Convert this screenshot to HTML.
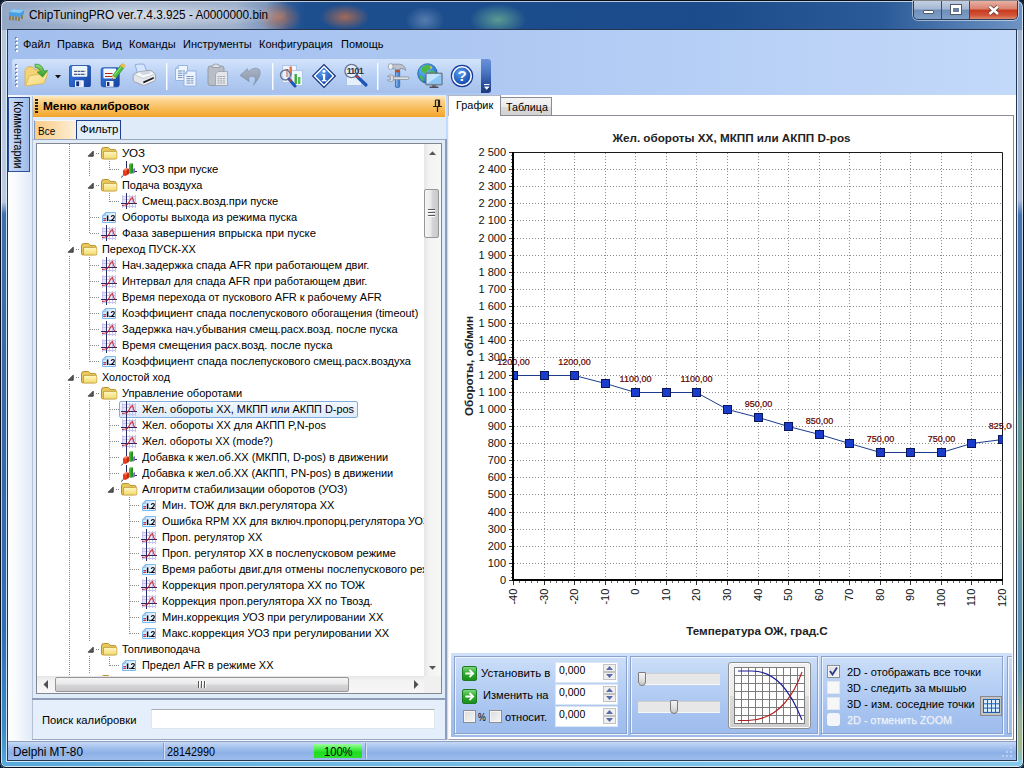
<!DOCTYPE html><html><head><meta charset="utf-8"><style>
*{box-sizing:border-box;margin:0;padding:0}
html,body{width:1024px;height:768px;overflow:hidden;background:#0b1a33;font-family:"Liberation Sans",sans-serif;font-size:11px;color:#000}
.abs{position:absolute}
#win{position:absolute;left:0;top:0;width:1024px;height:768px;border-radius:7px 7px 6px 6px;overflow:hidden;
 background:linear-gradient(90deg,#93a7c6 0,#a3b4ce 120px,#a0b1cc 235px,#7f98be 266px,#2f5c9a 288px,#1d4e8e 305px,#1b4b8a 700px,#2a5a97 880px,#6f94c4 1023px);}
#winborder{position:absolute;left:0;top:0;width:1024px;height:768px;border-radius:7px 7px 6px 6px;border:1px solid #0a0f1a;box-shadow:inset 0 0 0 1px rgba(255,255,255,.7)}
#client{position:absolute;left:8px;top:30px;width:1008px;height:730px;background:#bfdbff;overflow:hidden}
#clientborder{position:absolute;left:7px;top:29px;width:1010px;height:732px;border:1px solid #26364f}
.t{position:absolute;white-space:nowrap;line-height:1}
</style></head><body><div id="win">
<div class="abs" style="left:256px;top:2px;width:46px;height:28px;background:radial-gradient(ellipse at 50% 55%,rgba(205,115,70,.7),rgba(205,115,70,0) 70%)"></div>
<div class="abs" style="left:320px;top:4px;width:50px;height:26px;background:radial-gradient(ellipse at 50% 50%,rgba(205,115,70,.75),rgba(205,115,70,0) 70%)"></div>
<div class="abs" style="left:405px;top:6px;width:40px;height:24px;background:radial-gradient(ellipse at 50% 60%,rgba(140,170,210,.5),rgba(140,170,210,0) 70%)"></div>
<div class="abs" style="left:470px;top:4px;width:56px;height:26px;background:radial-gradient(ellipse at 50% 60%,rgba(110,180,150,.75),rgba(110,180,150,0) 72%)"></div>
<div class="abs" style="left:0;top:30px;width:8px;height:738px;background:linear-gradient(180deg,#b4c5dc 0,#bccbe0 165px,#b8c8de 172px,#3f6fae 184px,#3568aa 400px,#2f6fb3 600px,#3f8cc8 700px,#58a8da 738px)"></div>
<div class="abs" style="left:1016px;top:30px;width:8px;height:738px;background:linear-gradient(180deg,#a2b7d4 0,#a9bdd8 170px,#4575b3 185px,#3f74b4 340px,#5f9499 380px,#73a38d 470px,#5a92ad 540px,#5f97b4 640px,#9db596 690px,#a3b98f 715px,#7cc2e2 738px)"></div>
<div class="abs" style="left:0;top:760px;width:1024px;height:8px;background:linear-gradient(90deg,#58a8da 0,#6fb8e2 300px,#7cc2e8 700px,#86c8ea 1024px)"></div>
<div class="abs" style="left:6px;top:30px;width:1px;height:731px;background:rgba(225,240,255,.85)"></div>
<div class="abs" style="left:1017px;top:30px;width:1px;height:731px;background:rgba(225,240,255,.85)"></div>
<div class="abs" style="left:6px;top:761px;width:1012px;height:1px;background:rgba(225,245,255,.85)"></div>
</div>
<div id="winborder"></div>
<div class="abs" style="left:6px;top:3px;width:280px;height:24px;border-radius:12px;background:radial-gradient(ellipse at 50% 50%,rgba(255,255,255,.55),rgba(255,255,255,0) 75%)"></div>
<div class="t" style="left:29px;top:9px;font-size:12px;color:#000;transform-origin:0 0;transform:scaleX(.981)">ChipTuningPRO ver.7.4.3.925 - A0000000.bin</div>
<svg class="abs" style="left:8px;top:8px" width="18" height="14" viewBox="0 0 18 14">
<path d="M1 4 L5 1 L16 2 L16 6 L12 9 L1 8 Z" fill="#4a9fe0"/><path d="M1 4 L5 1 L16 2 L12 5 Z" fill="#8ccbf5"/>
<path d="M2 8 v4 M5 8.3 v4 M8 8.6 v4 M11 9 v4 M14 7 v4" stroke="#8a6a20" stroke-width="1.4"/></svg>
<div class="abs" style="left:913px;top:1px;width:105px;height:19px;border:1px solid #2a3d5c;border-top:none;border-radius:0 0 5px 5px;overflow:hidden;box-shadow:0 0 0 1px rgba(255,255,255,.5)">
<div class="abs" style="left:0;top:0;width:28px;height:18px;background:linear-gradient(180deg,#c3d0e2 0,#a4b7d2 45%,#6f8fba 50%,#7f9fc8 100%);border-right:1px solid #3a4d6c"></div>
<div class="abs" style="left:28px;top:0;width:28px;height:18px;background:linear-gradient(180deg,#c3d0e2 0,#a4b7d2 45%,#6f8fba 50%,#7f9fc8 100%);border-right:1px solid #3a4d6c"></div>
<div class="abs" style="left:56px;top:0;width:48px;height:18px;background:linear-gradient(180deg,#e7b1a4 0,#d9806d 45%,#c8391c 50%,#d2553a 80%,#e08a6a 100%)"></div>
<div class="abs" style="left:9px;top:9px;width:11px;height:4px;background:#fff;border:1px solid #505a68;border-radius:1px"></div>
<div class="abs" style="left:37px;top:4px;width:10px;height:9px;border:2px solid #fff;border-top-width:3px;outline:1px solid #505a68;background:#6c7f9c"></div>
<svg class="abs" style="left:73px;top:3px" width="14" height="12" viewBox="0 0 14 12"><path d="M2.5 2.5 L11 10 M11 2.5 L2.5 10" stroke="#5a3a3a" stroke-width="4"/><path d="M2.5 2.5 L11 10 M11 2.5 L2.5 10" stroke="#fff" stroke-width="2.5"/></svg>
</div>
<div id="clientborder"></div>
<div id="client">
<div id="c" class="abs" style="left:-8px;top:-30px;width:1024px;height:768px">
<div class="abs" style="left:8px;top:30px;width:1008px;height:66px;background:linear-gradient(90deg,#a3bfed 0,#a9c4f0 300px,#aec8f3 480px,#b9d1f6 760px,#c3d9fa 1008px)"></div>
<div class="abs" style="left:15px;top:37px;width:2px;height:16px;background:repeating-linear-gradient(180deg,#6f86b0 0,#6f86b0 2px,transparent 2px,transparent 4px)"></div><div class="abs" style="left:16px;top:38px;width:2px;height:16px;background:repeating-linear-gradient(180deg,#fff 0,#fff 2px,transparent 2px,transparent 4px)"></div>
<div class="t" style="left:23px;top:39px;font-size:11px">Файл</div>
<div class="t" style="left:57px;top:39px;font-size:11px">Правка</div>
<div class="t" style="left:102px;top:39px;font-size:11px">Вид</div>
<div class="t" style="left:129px;top:39px;font-size:11px">Команды</div>
<div class="t" style="left:183px;top:39px;font-size:11px">Инструменты</div>
<div class="t" style="left:259px;top:39px;font-size:11px">Конфигурация</div>
<div class="t" style="left:341px;top:39px;font-size:11px">Помощь</div>
<div class="abs" style="left:12px;top:59px;width:470px;height:34px;border-radius:3px 0 0 3px;background:linear-gradient(180deg,#d3e3fb 0,#c2d7f7 30%,#b2cbf2 62%,#a5c0eb 100%)"></div>
<div class="abs" style="left:481px;top:59px;width:10px;height:34px;border-radius:0 3px 3px 0;background:linear-gradient(180deg,#6a92da 0,#4a74c2 40%,#2a4f9c 75%,#1c3a80 100%)"></div>
<div class="abs" style="left:15px;top:64px;width:2px;height:24px;background:repeating-linear-gradient(180deg,#6f86b0 0,#6f86b0 2px,transparent 2px,transparent 4px)"></div><div class="abs" style="left:16px;top:65px;width:2px;height:24px;background:repeating-linear-gradient(180deg,#fff 0,#fff 2px,transparent 2px,transparent 4px)"></div>
<svg width="0" height="0" style="position:absolute"><defs>
<linearGradient id="tfo" x1="0" y1="0" x2="1" y2="1"><stop offset="0" stop-color="#fdeeb0"/><stop offset="1" stop-color="#f5d778"/></linearGradient>
<linearGradient id="tfl" x1="0" y1="0" x2="1" y2="1"><stop offset="0" stop-color="#3f82e2"/><stop offset=".5" stop-color="#2560c4"/><stop offset="1" stop-color="#17409c"/></linearGradient>
<linearGradient id="tgr" x1="0" y1="0" x2="0" y2="1"><stop offset="0" stop-color="#8fe070"/><stop offset="1" stop-color="#2a9a2a"/></linearGradient>
<radialGradient id="thl" cx=".4" cy=".3" r=".8"><stop offset="0" stop-color="#5aa0f0"/><stop offset="1" stop-color="#0d3fa8"/></radialGradient>
<radialGradient id="tgl" cx=".35" cy=".3" r=".8"><stop offset="0" stop-color="#6ac0f5"/><stop offset="1" stop-color="#1a62c0"/></radialGradient>
</defs></svg>
<svg class="abs" style="left:24px;top:62px" width="26" height="26" viewBox="0 0 26 26"><path d="M1 23.5 V8.2 Q1 7.5 1.8 7 L3.3 5.3 Q3.8 4.8 4.6 4.8 H8 Q8.8 4.8 9.3 5.5 L10.8 7.8 H18.5 Q19.5 7.8 19.5 8.8 V12" fill="#f3d376" stroke="#d9ad48" stroke-width=".9"/>
<path d="M1.3 24 L5.2 14.6 Q5.6 13.8 6.5 13.7 L22.8 10.6 Q23.9 10.5 23.6 11.6 L20.4 20.6 Q20.1 21.3 19.3 21.5 L1.3 24Z" fill="url(#tfo)" stroke="#ddb450" stroke-width=".9"/>
<path d="M11 2.2 Q18.5 1.5 19.8 9 L23.6 8.5 L18.6 15 L13.2 10 L16.6 9.5 Q15.8 5.6 11.2 5.4Z" fill="url(#tgr)" stroke="#2a8a2a" stroke-width=".7"/></svg>
<svg class="abs" style="left:55px;top:75px" width="6" height="4" viewBox="0 0 6 4"><path d="M0 0 H6 L3 3.5Z" fill="#111"/></svg>
<svg class="abs" style="left:69px;top:65px" width="22" height="22.4" viewBox="0 0 22 22.4"><rect x="0.4" y="0.4" width="21.2" height="21.6" rx="2.2" fill="url(#tfl)" stroke="#1a469c" stroke-width=".8"/>
<rect x="3" y="0.9" width="15.3" height="10.9" rx="1.3" fill="#edf5fe"/><path d="M5 6.4 H16.3 M5 9.4 H16.3" stroke="#4f5f78" stroke-width="1.1" stroke-dasharray="3 .5"/><rect x="6" y="15.3" width="8.8" height="6.7" rx=".6" fill="#eef2f8"/><rect x="7.2" y="16.4" width="2.8" height="4.8" fill="#16307c"/><rect x="10" y="16.4" width="1.6" height="4.8" fill="#c9d3e6"/></svg>
<svg class="abs" style="left:100px;top:63px" width="26" height="25" viewBox="0 0 26 25"><rect x="1.2" y="4.8" width="18" height="19" rx="2" fill="url(#tfl)" stroke="#1a469c" stroke-width=".8"/>
<rect x="3.4" y="5.5" width="12.8" height="10" rx="1" fill="#f3f8fe"/>
<path d="M5 10.5 H12.5 M5 13.5 H12.5" stroke="#b02818" stroke-width="1.2"/>
<rect x="6" y="18" width="7.5" height="5.8" rx=".5" fill="#eef2f8"/><rect x="7" y="19" width="2.4" height="4" fill="#16307c"/>
<path d="M12.6 12.6 L20.3 2.6 L23.6 5.2 L15.8 15.2Z" fill="#4cc044" stroke="#2a8f2a" stroke-width=".6"/><path d="M14.4 12.2 L21.4 3.4" stroke="#9be88a" stroke-width="1"/>
<path d="M20.3 2.6 L21.6 1 Q23 .4 24.2 1.4 Q25.2 2.6 24.8 3.6 L23.6 5.2Z" fill="#f2be48" stroke="#d09a28" stroke-width=".5"/>
<path d="M12.6 12.6 L15.8 15.2 L11.8 16.2Z" fill="#f2d9a0" stroke="#c9a860" stroke-width=".4"/><path d="M11.8 16.2 L13 15.9 L12.1 15.1Z" fill="#333"/></svg>
<svg class="abs" style="left:132px;top:63px" width="25" height="24" viewBox="0 0 25 24"><path d="M3 1.8 Q6 .6 12 1.2 L15.6 10 L6 11.6Z" fill="#d6e5fb" stroke="#7fa2e0" stroke-width=".8"/>
<path d="M1.2 12.6 Q1 11.4 2.4 10.8 L7 8.8 L17 7.4 Q18.4 7.3 19.4 8 L23 10.6 Q23.8 11.3 23.6 12.4 L23.4 16.6 Q23.4 17.6 22.4 18 L12.6 22.2 Q11.6 22.6 10.6 22.2 L2.2 18.6 Q1.2 18.2 1.2 17Z" fill="#e4e6ea" stroke="#8e96a8" stroke-width=".8"/>
<path d="M2 11.6 L11.6 15.4 L23 10.9 L19 8 L7 9Z" fill="#f6f7f9" stroke="#a4aab6" stroke-width=".5"/>
<path d="M7.5 9.6 L16.8 8.4 L19.4 10.2 L10.6 12Z" fill="#cfd6e2"/>
<path d="M11.2 18.4 L21.6 14 L21.8 15.8 L11.6 20.4Z" fill="#1c1c20"/><path d="M11.8 21 L22 16.6" stroke="#f8f8fa" stroke-width="1"/></svg>
<div class="abs" style="left:166px;top:63px;width:1px;height:27px;background:#f8fbff"></div><div class="abs" style="left:167px;top:63px;width:1px;height:27px;background:rgba(225,236,252,.7)"></div>
<div class="abs" style="left:272px;top:63px;width:1px;height:27px;background:#f8fbff"></div><div class="abs" style="left:273px;top:63px;width:1px;height:27px;background:rgba(225,236,252,.7)"></div>
<div class="abs" style="left:377px;top:63px;width:1px;height:27px;background:#f8fbff"></div><div class="abs" style="left:378px;top:63px;width:1px;height:27px;background:rgba(225,236,252,.7)"></div>
<svg class="abs" style="left:174px;top:64px" width="25" height="24" viewBox="0 0 25 24"><path d="M4.5 1.5 H13.5 V16.5 H1.5 V4.5Z" fill="#eef4fd" stroke="#8fb0de" stroke-width=".9"/><path d="M1.5 4.5 H4.5 V1.5Z" fill="#b8d0f2" stroke="#8fb0de" stroke-width=".6"/><path d="M4.0 7.0 H11.0" stroke="#6f8db8" stroke-width="1" stroke-dasharray="4 .6"/><path d="M4.0 9.2 H11.0" stroke="#6f8db8" stroke-width="1" stroke-dasharray="4 .6"/><path d="M4.0 11.4 H11.0" stroke="#6f8db8" stroke-width="1" stroke-dasharray="4 .6"/><path d="M4.0 13.600000000000001 H11.0" stroke="#6f8db8" stroke-width="1" stroke-dasharray="4 .6"/><path d="M13 7 H22 V22 H10 V10Z" fill="#eef4fd" stroke="#8fb0de" stroke-width=".9"/><path d="M10 10 H13 V7Z" fill="#b8d0f2" stroke="#8fb0de" stroke-width=".6"/><path d="M12.5 12.5 H19.5" stroke="#6f8db8" stroke-width="1" stroke-dasharray="4 .6"/><path d="M12.5 14.7 H19.5" stroke="#6f8db8" stroke-width="1" stroke-dasharray="4 .6"/><path d="M12.5 16.9 H19.5" stroke="#6f8db8" stroke-width="1" stroke-dasharray="4 .6"/><path d="M12.5 19.1 H19.5" stroke="#6f8db8" stroke-width="1" stroke-dasharray="4 .6"/></svg>
<svg class="abs" style="left:207px;top:63px" width="23" height="24" viewBox="0 0 23 24"><rect x="1" y="3" width="16" height="19.5" rx="2.5" fill="#b9bec6" stroke="#8e949d" stroke-width=".9"/>
<path d="M5.5 3.5 Q5.5 1 9 1 Q12.5 1 12.5 3.5 V4.5 H5.5Z" fill="#dfe2e7" stroke="#8e949d" stroke-width=".8"/>
<path d="M11 8.5 H20.5 V22.5 H8.5 V11Z" fill="#e3e6ea" stroke="#9aa0a8" stroke-width=".8"/>
<path d="M10.5 13.5 H18.5 M10.5 15.7 H18.5 M10.5 17.9 H18.5 M10.5 20 H18.5" stroke="#9da3ac" stroke-width="1" stroke-dasharray="2 .7"/></svg>
<svg class="abs" style="left:239px;top:66px" width="24" height="21" viewBox="0 0 24 21"><defs><linearGradient id="tun" x1="0" y1="0" x2="0" y2="1"><stop offset="0" stop-color="#a9b4c4"/><stop offset="1" stop-color="#8794a8"/></linearGradient></defs>
<path d="M1 9.4 L8.6 2.6 L9 6 Q15.5 -.2 20.3 3.6 Q24 8.5 14.3 19.2 Q18.3 12.4 15 10.7 Q12.2 9.6 9.6 11.6 L10.2 15.6Z" fill="url(#tun)" stroke="#7d8ba2" stroke-width=".6"/></svg>
<svg class="abs" style="left:279px;top:64px" width="25" height="24" viewBox="0 0 25 24"><rect x="3.5" y="1.5" width="14" height="17" fill="#f0f5fd" stroke="#a5bfe2" stroke-width=".8"/><rect x="12.5" y="6.5" width="11" height="15" fill="#f0f5fd" stroke="#a5bfe2" stroke-width=".8"/>
<rect x="7" y="5" width="2.4" height="8" fill="#d85030"/><rect x="10.5" y="2.5" width="2.4" height="9" fill="#e07040"/>
<rect x="15.5" y="10" width="2.4" height="10" fill="#3aaa3a"/><rect x="19" y="13" width="2.4" height="7" fill="#58c058"/>
<circle cx="6.5" cy="11" r="5" fill="rgba(220,235,255,.55)" stroke="#6a7690" stroke-width="1.4"/>
<path d="M10 15 L16 22" stroke="#1d54b8" stroke-width="3" stroke-linecap="round"/><path d="M10 15 L12 17.2" stroke="#c04030" stroke-width="2"/></svg>
<svg class="abs" style="left:311px;top:63px" width="26" height="26" viewBox="0 0 26 26"><path d="M13 0.8 L25.2 13 L13 25.2 L0.8 13Z" fill="#17347c"/><path d="M13 2.6 L23.4 13 L13 23.4 L2.6 13Z" fill="#fff"/><path d="M13 4.6 L21.4 13 L13 21.4 L4.6 13Z" fill="url(#thl)"/>
<circle cx="13" cy="8.3" r="1.5" fill="#fff"/><path d="M11 11 H14.2 V17 H15.5 V18.3 H10.8 V17 H12 V12.3 H11Z" fill="#fff"/></svg>
<svg class="abs" style="left:343px;top:63px" width="26" height="25" viewBox="0 0 26 25"><rect x="3.5" y="4.5" width="15" height="18" fill="#e6effb" stroke="#a5bfe2" stroke-width=".8"/>
<circle cx="8.5" cy="8" r="6.6" fill="rgba(235,243,255,.8)" stroke="#6a7690" stroke-width="1.3"/>
<text x="3.4" y="11.4" font-family="Liberation Sans, sans-serif" font-size="9.6" font-weight="bold" fill="#343a4e" letter-spacing="-1.1">1101</text>
<path d="M13.5 13 L23 22" stroke="#1d54b8" stroke-width="3.2" stroke-linecap="round"/><path d="M13.3 12.8 L15.5 15" stroke="#c04030" stroke-width="2.2"/></svg>
<svg class="abs" style="left:386px;top:63px" width="24" height="25" viewBox="0 0 24 25"><path d="M5 1.2 H13.5 Q18.8 1.6 19.8 7.4 Q17 4.8 13.9 5.6 V7.2 H9.3 V5.8 H5Z" fill="#bcc3cd" stroke="#7b828e" stroke-width=".7"/>
<ellipse cx="4.6" cy="3.5" rx="2.4" ry="2.9" fill="#eef0f3" stroke="#8a909a" stroke-width=".7"/>
<rect x="9.4" y="7" width="4.3" height="17.4" rx="1.2" fill="#4f88d0" stroke="#2c5ea6" stroke-width=".7"/><rect x="10.2" y="9.5" width="1.2" height="14" fill="#8bb7ea"/><rect x="9.4" y="7" width="4.3" height="2.2" fill="#b5522e"/>
<path d="M7 13.9 H21.8 Q22.9 13.9 22.9 15.2 Q22.9 16.5 21.8 16.5 H7Z" fill="#dcdfe4" stroke="#858b96" stroke-width=".7"/>
<path d="M7.4 12.6 Q3.8 10.4 1.4 13.4 L4.4 13.6 L4.4 16.9 L1.4 17.1 Q3.8 20 7.4 17.8Z" fill="#dcdfe4" stroke="#858b96" stroke-width=".7"/></svg>
<svg class="abs" style="left:417px;top:63px" width="27" height="26" viewBox="0 0 27 26"><circle cx="10.5" cy="10.5" r="9.8" fill="url(#tgl)" stroke="#1b57a8" stroke-width=".7"/>
<path d="M5 4 Q9 1 13 2.5 Q15 4 13.5 6 Q10 6.5 9.5 9.5 Q7 11.5 5.5 9 Q3.5 7 5 4Z M13 8 Q17 7 19.5 10.5 Q19 14 17 15 Q14 13 13 10.5Z M3 12 Q6 13 7 16.5 Q6 19 4.5 17.5 Q2.5 15 3 12Z" fill="#4cb848"/>
<path d="M13 3 Q15.5 3.5 15 5.5 L13.5 6Z" fill="#e8c040"/>
<rect x="8.7" y="10" width="16.6" height="12" rx=".8" fill="#868e9a" stroke="#5d646e" stroke-width=".6"/><rect x="9.8" y="11.1" width="14.4" height="9.8" fill="#8cc6f6"/><path d="M9.8 11.1 H24.2 L9.8 20.9Z" fill="#d4ecfd" opacity=".75"/>
<rect x="15" y="22" width="4" height="2" fill="#6a7079"/><rect x="12.5" y="23.6" width="9" height="1.5" rx=".7" fill="#4a4f57"/></svg>
<svg class="abs" style="left:450px;top:64px" width="24" height="24" viewBox="0 0 24 24"><circle cx="12" cy="12" r="11.2" fill="#123a9a"/><circle cx="12" cy="12" r="10" fill="#fff"/><circle cx="12" cy="12" r="8.4" fill="url(#thl)"/>
<text x="12" y="17.3" font-family="Liberation Sans, sans-serif" font-size="15" font-weight="bold" fill="#fff" text-anchor="middle">?</text></svg>
<svg class="abs" style="left:484px;top:84px" width="6" height="7" viewBox="0 0 6 7"><path d="M0 .5 H5.5" stroke="#fff" stroke-width="1.2"/><path d="M0.3 2.7 H5.3 L2.8 5.7Z" fill="#fff"/><path d="M1.3 3.7 H6.3 L3.8 6.7Z" fill="#0a1a4a" opacity=".6"/><path d="M0.3 2.7 H5.3 L2.8 5.7Z" fill="#fff"/></svg>
<svg width="0" height="0" style="position:absolute"><defs>
<linearGradient id="gf" x1="0" y1="0" x2="0" y2="1"><stop offset="0" stop-color="#fff8c4"/><stop offset="1" stop-color="#f2d86a"/></linearGradient>
<linearGradient id="gn" x1="0" y1="0" x2="1" y2="1"><stop offset="0" stop-color="#b5d8f7"/><stop offset=".55" stop-color="#eaf4fd"/><stop offset="1" stop-color="#d5e9fb"/></linearGradient>
<symbol id="fold" viewBox="0 0 17 13"><path d="M0.5 3 Q0.5 0.5 3 0.5 H7 Q8.3 0.5 8.8 1.6 L9.3 2.5 H14 Q15.5 2.5 15.5 4 V11 Q15.5 12.5 14 12.5 H2 Q0.5 12.5 0.5 11Z" fill="#e9c95c" stroke="#b28d2b"/>
<path d="M3 4.5 H15 Q16.5 4.5 16.5 6 V11 Q16.5 12.5 15 12.5 H3.5 Q2.5 12.5 2.5 11.5 V5 Q2.5 4.5 3 4.5Z" fill="url(#gf)" stroke="#c2a03c"/></symbol>
<symbol id="g2d" viewBox="0 0 16 16"><g stroke="#c7c4ee" stroke-width="1"><path d="M1.5 2 V15 M8.5 2 V15 M11.5 2 V15 M14.5 2 V15 M1 3.5 H15 M1 6.5 H15 M1 13.5 H15"/></g>
<g fill="#e6e4fa"><rect x="2" y="4" width="3" height="2"/><rect x="9" y="4" width="2" height="2"/><rect x="12" y="4" width="2" height="2"/><rect x="9" y="7" width="2" height="3"/><rect x="12" y="7" width="2" height="3"/><rect x="2" y="7" width="3" height="3"/></g>
<path d="M5.5 0 V16 M0 10.5 H16" stroke="#2a2a66" stroke-width="1"/><path d="M1 12.5 L4 12 L6.5 11.5 L8 9 L10 5.5 L11.5 4.5 L12.5 8 L13.5 10" fill="none" stroke="#cc2a2a" stroke-width="1.05"/></symbol>
<symbol id="g3d" viewBox="0 0 16 17"><path d="M5.5 0 V7.5 M13.6 10.5 H16 M2.2 14.6 L0.2 16.4" stroke="#26265e" stroke-width="1" fill="none"/>
<path d="M11.4 8.6 L13.2 7.2 L13.8 7.6 V11.6 L12.2 12.8 L11.4 12.4Z" fill="#8878de"/><path d="M13.2 7.2 L13.8 7.6 V11.6 L13.2 12Z" fill="#6a5ac8"/>
<path d="M8.1 3.2 L9.6 2 L11.9 2.4 V11.6 L10.4 12.8 L8.1 12.4Z" fill="#3cae30"/><path d="M8.1 3.2 L9.6 2 L11.9 2.4 L10.4 3.6Z" fill="#86e070"/><path d="M10.4 3.6 L11.9 2.4 V11.6 L10.4 12.8Z" fill="#27841f"/>
<path d="M2 9.2 L5.2 7.2 L7.7 7.8 V13 L4.6 15 L2 14.4Z" fill="#ea3c1c"/><path d="M2 9.2 L5.2 7.2 L7.7 7.8 L4.6 9.8Z" fill="#f98468"/><path d="M6.4 8.6 L7.7 7.8 V13 L6.4 13.8Z" fill="#a81a0e"/></symbol>
<symbol id="n12" viewBox="0 0 14 11"><path d="M3.5 0.5 H13.5 V10.5 H0.5 V3.5Z" fill="url(#gn)" stroke="#7dbbee"/><path d="M0.5 3.5 H3.5 V0.5Z" fill="#a9d0f4" stroke="#7dbbee" stroke-width=".6"/>
<path d="M1.3 6.5 H4 M1.3 8.5 H4" stroke="#d83038" stroke-width="1"/><path d="M1.3 7.5 H4" stroke="#8aa0e0" stroke-width=".8"/>
<path d="M5.6 3.5 V9" stroke="#0a0a1a" stroke-width="1.5"/><rect x="7.3" y="7.8" width="1.2" height="1.2" fill="#0a0a1a"/>
<path d="M9.4 4.9 Q9.5 3.5 10.9 3.5 Q12.4 3.5 12.3 5 Q12.2 6.2 9.5 8.5 H12.7" fill="none" stroke="#0a0a1a" stroke-width="1.2"/></symbol>
<symbol id="exp" viewBox="0 0 7 7"><path d="M6.2 1.2 V6.2 H1.2Z" fill="#5e5e5e" stroke="#2a2a2a" stroke-width=".9"/></symbol>
</defs></svg>
<div class="abs" style="left:8px;top:95px;width:24px;height:646px;background:linear-gradient(90deg,#ffffff 0,#f6f9fd 40%,#dfeaf8 100%)"></div>
<div class="abs" style="left:8px;top:97px;width:22px;height:75px;border:1px solid #2f4f96;background:linear-gradient(90deg,#c9dbf6 0,#b4ccf0 50%,#9fbce9 100%)"></div>
<div class="t" style="left:13px;top:100.5px;font-size:12.5px;transform-origin:0 0;transform:translate(11px,0) rotate(90deg) scaleX(.857)">Комментарии</div>
<div class="abs" style="left:32px;top:95px;width:414px;height:646px;background:#dfebf9"></div>
<div class="abs" style="left:32px;top:96px;width:413px;height:21px;background:linear-gradient(180deg,#fdeac4 0,#fbd491 20%,#f9c267 50%,#f6ae3c 85%,#f3a22a 100%)"></div>
<div class="abs" style="left:35px;top:99px;width:3px;height:15px;background:repeating-linear-gradient(180deg,#222 0,#222 2px,transparent 2px,transparent 3px)"></div>
<div class="t" style="left:43px;top:101px;font-size:11px;font-weight:bold;transform-origin:0 0;transform:scaleX(1.075)">Меню калибровок</div>
<svg class="abs" style="left:432px;top:99px" width="11" height="14" viewBox="0 0 11 14"><path d="M3.5 1 H7.5 M3.5 1 V7 M7.5 1 V7 M6.5 1 V7 M1 7.5 H10 M5.5 8 V13" stroke="#222" stroke-width="1.2" fill="none"/></svg>
<div class="abs" style="left:34px;top:120px;width:43px;height:20px;border:1px solid #f4f8fd;border-left-color:#7f96c4;border-bottom:none;background:linear-gradient(90deg,#f9cd86 0,#fbdcab 50%,#fdf0db 100%)"></div>
<div class="t" style="left:37.5px;top:126px;font-size:11px;transform-origin:0 0;transform:scaleX(.91)">Все</div>
<div class="abs" style="left:76px;top:120px;width:45px;height:20px;border:1px solid #1f3f8f;background:#e2eefc"></div>
<div class="t" style="left:80px;top:124px;font-size:11px;transform-origin:0 0;transform:scaleX(1.04)">Фильтр</div>
<div class="abs" style="left:32px;top:139px;width:414px;height:1px;background:#9aa7bd"></div>
<div class="abs" style="left:32px;top:96px;width:1px;height:645px;background:#b5c2d6"></div>
<div class="abs" style="left:445px;top:139px;width:2px;height:602px;background:#8d9dbd"></div>
<div class="abs" style="left:32px;top:698px;width:414px;height:2px;background:#8e9bb5"></div>
<div class="abs" style="left:32px;top:739px;width:415px;height:2px;background:#9aa7c0"></div>
<div class="abs" style="left:33px;top:700px;width:412px;height:39px;background:#e4effb"></div>
<div class="t" style="left:42px;top:715px;font-size:11px;transform-origin:0 0;transform:scaleX(1.02)">Поиск калибровки</div>
<div class="abs" style="left:151px;top:709px;width:284px;height:20px;background:#fff;border:1px solid #e0e6ee;border-top-color:#abadb3"></div>
<div class="abs" style="left:36px;top:143px;width:406px;height:551px;background:#fff;border:1px solid #828790;overflow:hidden"><div class="abs" style="left:-37px;top:-144px;width:500px;height:800px">
<svg class="abs" style="left:87px;top:150px" width="7" height="7"><use href="#exp"/></svg>
<div class="abs" style="left:96px;top:153px;width:4px;height:1px;background:repeating-linear-gradient(90deg,#8c8c8c 0,#8c8c8c 1px,transparent 1px,transparent 2px)"></div>
<svg class="abs" style="left:101px;top:147px" width="16.5" height="12.6"><use href="#fold"/></svg>
<div class="t tr" style="left:122px;top:148px;font-size:11px;transform-origin:0 0;transform:scaleX(1.0550)">УОЗ</div>
<div class="abs" style="left:110px;top:169px;width:10px;height:1px;background:repeating-linear-gradient(90deg,#8c8c8c 0,#8c8c8c 1px,transparent 1px,transparent 2px)"></div>
<svg class="abs" style="left:121px;top:161px" width="16" height="17"><use href="#g3d"/></svg>
<div class="t tr" style="left:142px;top:164px;font-size:11px;transform-origin:0 0;transform:scaleX(1.0311)">УОЗ при пуске</div>
<svg class="abs" style="left:87px;top:182px" width="7" height="7"><use href="#exp"/></svg>
<div class="abs" style="left:96px;top:185px;width:4px;height:1px;background:repeating-linear-gradient(90deg,#8c8c8c 0,#8c8c8c 1px,transparent 1px,transparent 2px)"></div>
<svg class="abs" style="left:101px;top:179px" width="16.5" height="12.6"><use href="#fold"/></svg>
<div class="t tr" style="left:122px;top:180px;font-size:11px;transform-origin:0 0;transform:scaleX(0.9926)">Подача воздуха</div>
<div class="abs" style="left:110px;top:201px;width:10px;height:1px;background:repeating-linear-gradient(90deg,#8c8c8c 0,#8c8c8c 1px,transparent 1px,transparent 2px)"></div>
<svg class="abs" style="left:121px;top:193px" width="16" height="16"><use href="#g2d"/></svg>
<div class="t tr" style="left:142px;top:196px;font-size:11px;transform-origin:0 0;transform:scaleX(1.0081)">Смещ.расх.возд.при пуске</div>
<div class="abs" style="left:90px;top:217px;width:10px;height:1px;background:repeating-linear-gradient(90deg,#8c8c8c 0,#8c8c8c 1px,transparent 1px,transparent 2px)"></div>
<svg class="abs" style="left:102px;top:212px" width="14" height="11"><use href="#n12"/></svg>
<div class="t tr" style="left:122px;top:212px;font-size:11px;transform-origin:0 0;transform:scaleX(1.0063)">Обороты выхода из режима пуска</div>
<div class="abs" style="left:90px;top:233px;width:10px;height:1px;background:repeating-linear-gradient(90deg,#8c8c8c 0,#8c8c8c 1px,transparent 1px,transparent 2px)"></div>
<svg class="abs" style="left:101px;top:225px" width="16" height="16"><use href="#g2d"/></svg>
<div class="t tr" style="left:122px;top:228px;font-size:11px;transform-origin:0 0;transform:scaleX(1.0286)">Фаза завершения впрыска при пуске</div>
<svg class="abs" style="left:67px;top:246px" width="7" height="7"><use href="#exp"/></svg>
<div class="abs" style="left:76px;top:249px;width:4px;height:1px;background:repeating-linear-gradient(90deg,#8c8c8c 0,#8c8c8c 1px,transparent 1px,transparent 2px)"></div>
<svg class="abs" style="left:81px;top:243px" width="16.5" height="12.6"><use href="#fold"/></svg>
<div class="t tr" style="left:102px;top:244px;font-size:11px;transform-origin:0 0;transform:scaleX(0.9936)">Переход ПУСК-ХХ</div>
<div class="abs" style="left:90px;top:265px;width:10px;height:1px;background:repeating-linear-gradient(90deg,#8c8c8c 0,#8c8c8c 1px,transparent 1px,transparent 2px)"></div>
<svg class="abs" style="left:101px;top:257px" width="16" height="16"><use href="#g2d"/></svg>
<div class="t tr" style="left:122px;top:260px;font-size:11px;transform-origin:0 0;transform:scaleX(1.0012)">Нач.задержка спада AFR при работающем двиг.</div>
<div class="abs" style="left:90px;top:281px;width:10px;height:1px;background:repeating-linear-gradient(90deg,#8c8c8c 0,#8c8c8c 1px,transparent 1px,transparent 2px)"></div>
<svg class="abs" style="left:101px;top:273px" width="16" height="16"><use href="#g2d"/></svg>
<div class="t tr" style="left:122px;top:276px;font-size:11px;transform-origin:0 0;transform:scaleX(0.9919)">Интервал для спада AFR при работающем двиг.</div>
<div class="abs" style="left:90px;top:297px;width:10px;height:1px;background:repeating-linear-gradient(90deg,#8c8c8c 0,#8c8c8c 1px,transparent 1px,transparent 2px)"></div>
<svg class="abs" style="left:101px;top:289px" width="16" height="16"><use href="#g2d"/></svg>
<div class="t tr" style="left:122px;top:292px;font-size:11px;transform-origin:0 0;transform:scaleX(0.9946)">Время перехода от пускового AFR к рабочему AFR</div>
<div class="abs" style="left:90px;top:313px;width:10px;height:1px;background:repeating-linear-gradient(90deg,#8c8c8c 0,#8c8c8c 1px,transparent 1px,transparent 2px)"></div>
<svg class="abs" style="left:102px;top:308px" width="14" height="11"><use href="#n12"/></svg>
<div class="t tr" style="left:122px;top:308px;font-size:11px;transform-origin:0 0;transform:scaleX(0.9903)">Коэффициент спада послепускового обогащения (timeout)</div>
<div class="abs" style="left:90px;top:329px;width:10px;height:1px;background:repeating-linear-gradient(90deg,#8c8c8c 0,#8c8c8c 1px,transparent 1px,transparent 2px)"></div>
<svg class="abs" style="left:101px;top:321px" width="16" height="16"><use href="#g2d"/></svg>
<div class="t tr" style="left:122px;top:324px;font-size:11px;transform-origin:0 0;transform:scaleX(1.0047)">Задержка нач.убывания смещ.расх.возд. после пуска</div>
<div class="abs" style="left:90px;top:345px;width:10px;height:1px;background:repeating-linear-gradient(90deg,#8c8c8c 0,#8c8c8c 1px,transparent 1px,transparent 2px)"></div>
<svg class="abs" style="left:101px;top:337px" width="16" height="16"><use href="#g2d"/></svg>
<div class="t tr" style="left:122px;top:340px;font-size:11px;transform-origin:0 0;transform:scaleX(1.0106)">Время смещения расх.возд. после пуска</div>
<div class="abs" style="left:90px;top:361px;width:10px;height:1px;background:repeating-linear-gradient(90deg,#8c8c8c 0,#8c8c8c 1px,transparent 1px,transparent 2px)"></div>
<svg class="abs" style="left:102px;top:356px" width="14" height="11"><use href="#n12"/></svg>
<div class="t tr" style="left:122px;top:356px;font-size:11px;transform-origin:0 0;transform:scaleX(1.0014)">Коэффициент спада послепускового смещ.расх.воздуха</div>
<svg class="abs" style="left:67px;top:374px" width="7" height="7"><use href="#exp"/></svg>
<div class="abs" style="left:76px;top:377px;width:4px;height:1px;background:repeating-linear-gradient(90deg,#8c8c8c 0,#8c8c8c 1px,transparent 1px,transparent 2px)"></div>
<svg class="abs" style="left:81px;top:371px" width="16.5" height="12.6"><use href="#fold"/></svg>
<div class="t tr" style="left:102px;top:372px;font-size:11px;transform-origin:0 0;transform:scaleX(0.9827)">Холостой ход</div>
<svg class="abs" style="left:87px;top:390px" width="7" height="7"><use href="#exp"/></svg>
<div class="abs" style="left:96px;top:393px;width:4px;height:1px;background:repeating-linear-gradient(90deg,#8c8c8c 0,#8c8c8c 1px,transparent 1px,transparent 2px)"></div>
<svg class="abs" style="left:101px;top:387px" width="16.5" height="12.6"><use href="#fold"/></svg>
<div class="t tr" style="left:122px;top:388px;font-size:11px;transform-origin:0 0;transform:scaleX(1.0067)">Управление оборотами</div>
<div class="abs" style="left:119px;top:401px;width:239px;height:17px;border:1px solid #84acdd;border-radius:2px;background:linear-gradient(180deg,#f3f8fe,#dcebfc)"></div>
<div class="abs" style="left:110px;top:409px;width:10px;height:1px;background:repeating-linear-gradient(90deg,#8c8c8c 0,#8c8c8c 1px,transparent 1px,transparent 2px)"></div>
<svg class="abs" style="left:121px;top:401px" width="16" height="16"><use href="#g2d"/></svg>
<div class="t tr" style="left:142px;top:404px;font-size:11px;transform-origin:0 0;transform:scaleX(0.9916)">Жел. обороты ХХ, МКПП или АКПП D-pos</div>
<div class="abs" style="left:110px;top:425px;width:10px;height:1px;background:repeating-linear-gradient(90deg,#8c8c8c 0,#8c8c8c 1px,transparent 1px,transparent 2px)"></div>
<svg class="abs" style="left:121px;top:417px" width="16" height="16"><use href="#g2d"/></svg>
<div class="t tr" style="left:142px;top:420px;font-size:11px;transform-origin:0 0;transform:scaleX(0.9924)">Жел. обороты ХХ для АКПП P,N-pos</div>
<div class="abs" style="left:110px;top:441px;width:10px;height:1px;background:repeating-linear-gradient(90deg,#8c8c8c 0,#8c8c8c 1px,transparent 1px,transparent 2px)"></div>
<svg class="abs" style="left:121px;top:433px" width="16" height="16"><use href="#g2d"/></svg>
<div class="t tr" style="left:142px;top:436px;font-size:11px;transform-origin:0 0;transform:scaleX(0.9790)">Жел. обороты ХХ (mode?)</div>
<div class="abs" style="left:110px;top:457px;width:10px;height:1px;background:repeating-linear-gradient(90deg,#8c8c8c 0,#8c8c8c 1px,transparent 1px,transparent 2px)"></div>
<svg class="abs" style="left:121px;top:449px" width="16" height="17"><use href="#g3d"/></svg>
<div class="t tr" style="left:142px;top:452px;font-size:11px;transform-origin:0 0;transform:scaleX(1.0012)">Добавка к жел.об.ХХ (МКПП, D-pos) в движении</div>
<div class="abs" style="left:110px;top:473px;width:10px;height:1px;background:repeating-linear-gradient(90deg,#8c8c8c 0,#8c8c8c 1px,transparent 1px,transparent 2px)"></div>
<svg class="abs" style="left:121px;top:465px" width="16" height="17"><use href="#g3d"/></svg>
<div class="t tr" style="left:142px;top:468px;font-size:11px;transform-origin:0 0;transform:scaleX(0.9992)">Добавка к жел.об.ХХ (АКПП, PN-pos) в движении</div>
<svg class="abs" style="left:107px;top:486px" width="7" height="7"><use href="#exp"/></svg>
<div class="abs" style="left:116px;top:489px;width:4px;height:1px;background:repeating-linear-gradient(90deg,#8c8c8c 0,#8c8c8c 1px,transparent 1px,transparent 2px)"></div>
<svg class="abs" style="left:121px;top:483px" width="16.5" height="12.6"><use href="#fold"/></svg>
<div class="t tr" style="left:142px;top:484px;font-size:11px;transform-origin:0 0;transform:scaleX(0.9990)">Алгоритм стабилизации оборотов (УОЗ)</div>
<div class="abs" style="left:130px;top:505px;width:10px;height:1px;background:repeating-linear-gradient(90deg,#8c8c8c 0,#8c8c8c 1px,transparent 1px,transparent 2px)"></div>
<svg class="abs" style="left:142px;top:500px" width="14" height="11"><use href="#n12"/></svg>
<div class="t tr" style="left:162px;top:500px;font-size:11px;transform-origin:0 0;transform:scaleX(1.0006)">Мин. ТОЖ для вкл.регулятора ХХ</div>
<div class="abs" style="left:130px;top:521px;width:10px;height:1px;background:repeating-linear-gradient(90deg,#8c8c8c 0,#8c8c8c 1px,transparent 1px,transparent 2px)"></div>
<svg class="abs" style="left:142px;top:516px" width="14" height="11"><use href="#n12"/></svg>
<div class="t tr" style="left:162px;top:516px;font-size:11px;transform-origin:0 0;transform:scaleX(0.9802)">Ошибка RPM ХХ для включ.пропорц.регулятора УОЗ</div>
<div class="abs" style="left:130px;top:537px;width:10px;height:1px;background:repeating-linear-gradient(90deg,#8c8c8c 0,#8c8c8c 1px,transparent 1px,transparent 2px)"></div>
<svg class="abs" style="left:141px;top:529px" width="16" height="16"><use href="#g2d"/></svg>
<div class="t tr" style="left:162px;top:532px;font-size:11px;transform-origin:0 0;transform:scaleX(0.9931)">Проп. регулятор ХХ</div>
<div class="abs" style="left:130px;top:553px;width:10px;height:1px;background:repeating-linear-gradient(90deg,#8c8c8c 0,#8c8c8c 1px,transparent 1px,transparent 2px)"></div>
<svg class="abs" style="left:141px;top:545px" width="16" height="16"><use href="#g2d"/></svg>
<div class="t tr" style="left:162px;top:548px;font-size:11px;transform-origin:0 0;transform:scaleX(1.0056)">Проп. регулятор ХХ в послепусковом режиме</div>
<div class="abs" style="left:130px;top:569px;width:10px;height:1px;background:repeating-linear-gradient(90deg,#8c8c8c 0,#8c8c8c 1px,transparent 1px,transparent 2px)"></div>
<svg class="abs" style="left:142px;top:564px" width="14" height="11"><use href="#n12"/></svg>
<div class="t tr" style="left:162px;top:564px;font-size:11px;transform-origin:0 0;transform:scaleX(1.0045)">Время работы двиг.для отмены послепускового режима</div>
<div class="abs" style="left:130px;top:585px;width:10px;height:1px;background:repeating-linear-gradient(90deg,#8c8c8c 0,#8c8c8c 1px,transparent 1px,transparent 2px)"></div>
<svg class="abs" style="left:141px;top:577px" width="16" height="16"><use href="#g2d"/></svg>
<div class="t tr" style="left:162px;top:580px;font-size:11px;transform-origin:0 0;transform:scaleX(1.0045)">Коррекция проп.регулятора ХХ по ТОЖ</div>
<div class="abs" style="left:130px;top:601px;width:10px;height:1px;background:repeating-linear-gradient(90deg,#8c8c8c 0,#8c8c8c 1px,transparent 1px,transparent 2px)"></div>
<svg class="abs" style="left:141px;top:593px" width="16" height="16"><use href="#g2d"/></svg>
<div class="t tr" style="left:162px;top:596px;font-size:11px;transform-origin:0 0;transform:scaleX(1.0048)">Коррекция проп.регулятора ХХ по Твозд.</div>
<div class="abs" style="left:130px;top:617px;width:10px;height:1px;background:repeating-linear-gradient(90deg,#8c8c8c 0,#8c8c8c 1px,transparent 1px,transparent 2px)"></div>
<svg class="abs" style="left:142px;top:612px" width="14" height="11"><use href="#n12"/></svg>
<div class="t tr" style="left:162px;top:612px;font-size:11px;transform-origin:0 0;transform:scaleX(1.0036)">Мин.коррекция УОЗ при регулировании ХХ</div>
<div class="abs" style="left:130px;top:633px;width:10px;height:1px;background:repeating-linear-gradient(90deg,#8c8c8c 0,#8c8c8c 1px,transparent 1px,transparent 2px)"></div>
<svg class="abs" style="left:142px;top:628px" width="14" height="11"><use href="#n12"/></svg>
<div class="t tr" style="left:162px;top:628px;font-size:11px;transform-origin:0 0;transform:scaleX(1.0102)">Макс.коррекция УОЗ при регулировании ХХ</div>
<svg class="abs" style="left:87px;top:646px" width="7" height="7"><use href="#exp"/></svg>
<div class="abs" style="left:96px;top:649px;width:4px;height:1px;background:repeating-linear-gradient(90deg,#8c8c8c 0,#8c8c8c 1px,transparent 1px,transparent 2px)"></div>
<svg class="abs" style="left:101px;top:643px" width="16.5" height="12.6"><use href="#fold"/></svg>
<div class="t tr" style="left:122px;top:644px;font-size:11px;transform-origin:0 0;transform:scaleX(0.9962)">Топливоподача</div>
<div class="abs" style="left:110px;top:665px;width:10px;height:1px;background:repeating-linear-gradient(90deg,#8c8c8c 0,#8c8c8c 1px,transparent 1px,transparent 2px)"></div>
<svg class="abs" style="left:122px;top:660px" width="14" height="11"><use href="#n12"/></svg>
<div class="t tr" style="left:142px;top:660px;font-size:11px;transform-origin:0 0;transform:scaleX(0.9917)">Предел AFR в режиме ХХ</div>
<svg class="abs" style="left:87px;top:678px" width="7" height="7"><use href="#exp"/></svg>
<div class="abs" style="left:96px;top:681px;width:4px;height:1px;background:repeating-linear-gradient(90deg,#8c8c8c 0,#8c8c8c 1px,transparent 1px,transparent 2px)"></div>
<svg class="abs" style="left:101px;top:675px" width="16.5" height="12.6"><use href="#fold"/></svg>
<div class="t tr" style="left:122px;top:676px;font-size:11px;transform-origin:0 0;transform:scaleX(1.0000)"></div>
<div class="abs" style="left:69px;top:144px;width:1px;height:97px;background:repeating-linear-gradient(180deg,#8c8c8c 0,#8c8c8c 1px,transparent 1px,transparent 2px)"></div>
<div class="abs" style="left:69px;top:256px;width:1px;height:113px;background:repeating-linear-gradient(180deg,#8c8c8c 0,#8c8c8c 1px,transparent 1px,transparent 2px)"></div>
<div class="abs" style="left:69px;top:384px;width:1px;height:310px;background:repeating-linear-gradient(180deg,#8c8c8c 0,#8c8c8c 1px,transparent 1px,transparent 2px)"></div>
<div class="abs" style="left:89px;top:161px;width:1px;height:16px;background:repeating-linear-gradient(180deg,#8c8c8c 0,#8c8c8c 1px,transparent 1px,transparent 2px)"></div>
<div class="abs" style="left:89px;top:192px;width:1px;height:42px;background:repeating-linear-gradient(180deg,#8c8c8c 0,#8c8c8c 1px,transparent 1px,transparent 2px)"></div>
<div class="abs" style="left:89px;top:257px;width:1px;height:105px;background:repeating-linear-gradient(180deg,#8c8c8c 0,#8c8c8c 1px,transparent 1px,transparent 2px)"></div>
<div class="abs" style="left:89px;top:400px;width:1px;height:241px;background:repeating-linear-gradient(180deg,#8c8c8c 0,#8c8c8c 1px,transparent 1px,transparent 2px)"></div>
<div class="abs" style="left:89px;top:656px;width:1px;height:17px;background:repeating-linear-gradient(180deg,#8c8c8c 0,#8c8c8c 1px,transparent 1px,transparent 2px)"></div>
<div class="abs" style="left:109px;top:161px;width:1px;height:9px;background:repeating-linear-gradient(180deg,#8c8c8c 0,#8c8c8c 1px,transparent 1px,transparent 2px)"></div>
<div class="abs" style="left:109px;top:193px;width:1px;height:9px;background:repeating-linear-gradient(180deg,#8c8c8c 0,#8c8c8c 1px,transparent 1px,transparent 2px)"></div>
<div class="abs" style="left:109px;top:401px;width:1px;height:80px;background:repeating-linear-gradient(180deg,#8c8c8c 0,#8c8c8c 1px,transparent 1px,transparent 2px)"></div>
<div class="abs" style="left:109px;top:657px;width:1px;height:9px;background:repeating-linear-gradient(180deg,#8c8c8c 0,#8c8c8c 1px,transparent 1px,transparent 2px)"></div>
<div class="abs" style="left:129px;top:497px;width:1px;height:137px;background:repeating-linear-gradient(180deg,#8c8c8c 0,#8c8c8c 1px,transparent 1px,transparent 2px)"></div>
</div>
<div class="abs" style="left:387px;top:0;width:17px;height:532px;background:linear-gradient(90deg,#e6e6e6 0,#f3f3f3 30%,#f7f7f7 100%)"></div>
<div class="abs" style="left:387px;top:45px;width:15px;height:49px;border:1px solid #979797;border-radius:2px;background:linear-gradient(90deg,#f5f5f5 0,#e9e9ea 45%,#d6d6d8 55%,#c9c9cc 100%)"></div>
<div class="abs" style="left:391px;top:65px;width:7px;height:8px;background:repeating-linear-gradient(180deg,#5a5a5a 0,#5a5a5a 1px,#fff 1px,#fff 2px,transparent 2px,transparent 3px)"></div>
<svg class="abs" style="left:392px;top:7px" width="7" height="4"><path d="M0 4 L3.5 0.3 L7 4Z" fill="#555"/></svg>
<svg class="abs" style="left:392px;top:522px" width="7" height="4"><path d="M0 0 L3.5 3.7 L7 0Z" fill="#555"/></svg>
<div class="abs" style="left:0;top:532px;width:404px;height:17px;background:linear-gradient(180deg,#e6e6e6 0,#f3f3f3 30%,#f7f7f7 100%)"></div>
<div class="abs" style="left:387px;top:532px;width:17px;height:17px;background:#f0f0f0"></div>
<div class="abs" style="left:18px;top:533px;width:294px;height:15px;border:1px solid #979797;border-radius:2px;background:linear-gradient(180deg,#f5f5f5 0,#e9e9ea 45%,#d6d6d8 55%,#c9c9cc 100%)"></div>
<div class="abs" style="left:161px;top:537px;width:8px;height:7px;background:repeating-linear-gradient(90deg,#5a5a5a 0,#5a5a5a 1px,#fff 1px,#fff 2px,transparent 2px,transparent 3px)"></div>
<svg class="abs" style="left:6px;top:536px" width="5" height="9"><path d="M5 0 L0.5 4.5 L5 9Z" fill="#505050"/></svg>
<svg class="abs" style="left:377px;top:536px" width="5" height="9"><path d="M0 0 L4.5 4.5 L0 9Z" fill="#505050"/></svg>
</div>
<div class="abs" style="left:448px;top:95px;width:568px;height:645px;background:#fff"></div>
<div class="abs" style="left:448px;top:115px;width:566px;height:625px;border:1px solid #898c95;border-left-color:#f4f5f7;border-bottom-color:#9a9da6"></div>
<div class="abs" style="left:448px;top:95px;width:53px;height:21px;background:#fff;border:1px solid #b4b8c0;border-right-color:#898c95;border-bottom:none"></div>
<div class="t" style="left:456px;top:100px;font-size:11px;transform-origin:0 0;transform:scaleX(.99)">График</div>
<div class="abs" style="left:501px;top:97px;width:51px;height:19px;border:1px solid #898c95;border-left:none;background:linear-gradient(180deg,#f4f4f4 0,#ebebeb 50%,#dcdcdc 52%,#d2d2d2 100%)"></div>
<div class="t" style="left:506px;top:102px;font-size:11px;transform-origin:0 0;transform:scaleX(.97)">Таблица</div>
<svg class="abs" style="left:449px;top:116px" width="563" height="536" viewBox="449 116 563 536" font-family="Liberation Sans, sans-serif">
<defs><clipPath id="plotclip"><rect x="514" y="153" width="488.5" height="428"/></clipPath></defs>
<path d="M514 563.5 H1002 M514 546.5 H1002 M514 529.5 H1002 M514 512.5 H1002 M514 494.5 H1002 M514 477.5 H1002 M514 460.5 H1002 M514 443.5 H1002 M514 426.5 H1002 M514 409.5 H1002 M514 392.5 H1002 M514 375.5 H1002 M514 357.5 H1002 M514 340.5 H1002 M514 323.5 H1002 M514 306.5 H1002 M514 289.5 H1002 M514 272.5 H1002 M514 255.5 H1002 M514 238.5 H1002 M514 220.5 H1002 M514 203.5 H1002 M514 186.5 H1002 M514 169.5 H1002 M544.5 153 V579 M574.5 153 V579 M605.5 153 V579 M635.5 153 V579 M666.5 153 V579 M696.5 153 V579 M727.5 153 V579 M758.5 153 V579 M788.5 153 V579 M819.5 153 V579 M849.5 153 V579 M880.5 153 V579 M910.5 153 V579 M941.5 153 V579 M971.5 153 V579" stroke="#8c8c8c" stroke-width="1" stroke-dasharray="1 2" fill="none"/>
<path d="M514 152.5 H1002.5 V580" stroke="#1a1a1a" stroke-width="1" fill="none"/>
<path d="M513 152 V581 M512 580 H1003" stroke="#000" stroke-width="2" fill="none"/>
<path d="M509 580.5 H512 M509 563.5 H512 M509 546.5 H512 M509 529.5 H512 M509 512.5 H512 M509 494.5 H512 M509 477.5 H512 M509 460.5 H512 M509 443.5 H512 M509 426.5 H512 M509 409.5 H512 M509 392.5 H512 M509 375.5 H512 M509 357.5 H512 M509 340.5 H512 M509 323.5 H512 M509 306.5 H512 M509 289.5 H512 M509 272.5 H512 M509 255.5 H512 M509 238.5 H512 M509 220.5 H512 M509 203.5 H512 M509 186.5 H512 M509 169.5 H512 M509 152.5 H512 M513.5 581 V585 M544.5 581 V585 M574.5 581 V585 M605.5 581 V585 M635.5 581 V585 M666.5 581 V585 M696.5 581 V585 M727.5 581 V585 M758.5 581 V585 M788.5 581 V585 M819.5 581 V585 M849.5 581 V585 M880.5 581 V585 M910.5 581 V585 M941.5 581 V585 M971.5 581 V585 M1002.5 581 V585" stroke="#333" stroke-width="1" fill="none"/>
<path d="M519.5 581 V583 M525.5 581 V583 M531.5 581 V583 M537.5 581 V583 M550.5 581 V583 M556.5 581 V583 M562.5 581 V583 M568.5 581 V583 M580.5 581 V583 M586.5 581 V583 M592.5 581 V583 M599.5 581 V583 M611.5 581 V583 M617.5 581 V583 M623.5 581 V583 M629.5 581 V583 M641.5 581 V583 M647.5 581 V583 M654.5 581 V583 M660.5 581 V583 M672.5 581 V583 M678.5 581 V583 M684.5 581 V583 M690.5 581 V583 M702.5 581 V583 M709.5 581 V583 M715.5 581 V583 M721.5 581 V583 M733.5 581 V583 M739.5 581 V583 M745.5 581 V583 M751.5 581 V583 M764.5 581 V583 M770.5 581 V583 M776.5 581 V583 M782.5 581 V583 M794.5 581 V583 M800.5 581 V583 M806.5 581 V583 M813.5 581 V583 M825.5 581 V583 M831.5 581 V583 M837.5 581 V583 M843.5 581 V583 M855.5 581 V583 M861.5 581 V583 M868.5 581 V583 M874.5 581 V583 M886.5 581 V583 M892.5 581 V583 M898.5 581 V583 M904.5 581 V583 M916.5 581 V583 M923.5 581 V583 M929.5 581 V583 M935.5 581 V583 M947.5 581 V583 M953.5 581 V583 M959.5 581 V583 M965.5 581 V583 M978.5 581 V583 M984.5 581 V583 M990.5 581 V583 M996.5 581 V583 M511 577.5 H512 M511 573.5 H512 M511 570.5 H512 M511 566.5 H512 M511 559.5 H512 M511 556.5 H512 M511 553.5 H512 M511 549.5 H512 M511 542.5 H512 M511 539.5 H512 M511 535.5 H512 M511 532.5 H512 M511 525.5 H512 M511 522.5 H512 M511 518.5 H512 M511 515.5 H512 M511 508.5 H512 M511 505.5 H512 M511 501.5 H512 M511 498.5 H512 M511 491.5 H512 M511 488.5 H512 M511 484.5 H512 M511 481.5 H512 M511 474.5 H512 M511 470.5 H512 M511 467.5 H512 M511 464.5 H512 M511 457.5 H512 M511 453.5 H512 M511 450.5 H512 M511 446.5 H512 M511 440.5 H512 M511 436.5 H512 M511 433.5 H512 M511 429.5 H512 M511 422.5 H512 M511 419.5 H512 M511 416.5 H512 M511 412.5 H512 M511 405.5 H512 M511 402.5 H512 M511 399.5 H512 M511 395.5 H512 M511 388.5 H512 M511 385.5 H512 M511 381.5 H512 M511 378.5 H512 M511 371.5 H512 M511 368.5 H512 M511 364.5 H512 M511 361.5 H512 M511 354.5 H512 M511 351.5 H512 M511 347.5 H512 M511 344.5 H512 M511 337.5 H512 M511 333.5 H512 M511 330.5 H512 M511 327.5 H512 M511 320.5 H512 M511 316.5 H512 M511 313.5 H512 M511 310.5 H512 M511 303.5 H512 M511 299.5 H512 M511 296.5 H512 M511 292.5 H512 M511 286.5 H512 M511 282.5 H512 M511 279.5 H512 M511 275.5 H512 M511 268.5 H512 M511 265.5 H512 M511 262.5 H512 M511 258.5 H512 M511 251.5 H512 M511 248.5 H512 M511 244.5 H512 M511 241.5 H512 M511 234.5 H512 M511 231.5 H512 M511 227.5 H512 M511 224.5 H512 M511 217.5 H512 M511 214.5 H512 M511 210.5 H512 M511 207.5 H512 M511 200.5 H512 M511 197.5 H512 M511 193.5 H512 M511 190.5 H512 M511 183.5 H512 M511 179.5 H512 M511 176.5 H512 M511 173.5 H512 M511 166.5 H512 M511 162.5 H512 M511 159.5 H512 M511 155.5 H512" stroke="#6a6a6a" stroke-width="1" fill="none"/>
<text x="506" y="584.2" font-size="11" text-anchor="end" fill="#111">0</text>
<text x="506" y="567.2" font-size="11" text-anchor="end" fill="#111">100</text>
<text x="506" y="550.2" font-size="11" text-anchor="end" fill="#111">200</text>
<text x="506" y="533.2" font-size="11" text-anchor="end" fill="#111">300</text>
<text x="506" y="516.2" font-size="11" text-anchor="end" fill="#111">400</text>
<text x="506" y="498.2" font-size="11" text-anchor="end" fill="#111">500</text>
<text x="506" y="481.2" font-size="11" text-anchor="end" fill="#111">600</text>
<text x="506" y="464.2" font-size="11" text-anchor="end" fill="#111">700</text>
<text x="506" y="447.2" font-size="11" text-anchor="end" fill="#111">800</text>
<text x="506" y="430.2" font-size="11" text-anchor="end" fill="#111">900</text>
<text x="506" y="413.2" font-size="11" text-anchor="end" fill="#111">1 000</text>
<text x="506" y="396.2" font-size="11" text-anchor="end" fill="#111">1 100</text>
<text x="506" y="379.2" font-size="11" text-anchor="end" fill="#111">1 200</text>
<text x="506" y="361.2" font-size="11" text-anchor="end" fill="#111">1 300</text>
<text x="506" y="344.2" font-size="11" text-anchor="end" fill="#111">1 400</text>
<text x="506" y="327.2" font-size="11" text-anchor="end" fill="#111">1 500</text>
<text x="506" y="310.2" font-size="11" text-anchor="end" fill="#111">1 600</text>
<text x="506" y="293.2" font-size="11" text-anchor="end" fill="#111">1 700</text>
<text x="506" y="276.2" font-size="11" text-anchor="end" fill="#111">1 800</text>
<text x="506" y="259.2" font-size="11" text-anchor="end" fill="#111">1 900</text>
<text x="506" y="242.2" font-size="11" text-anchor="end" fill="#111">2 000</text>
<text x="506" y="224.2" font-size="11" text-anchor="end" fill="#111">2 100</text>
<text x="506" y="207.2" font-size="11" text-anchor="end" fill="#111">2 200</text>
<text x="506" y="190.2" font-size="11" text-anchor="end" fill="#111">2 300</text>
<text x="506" y="173.2" font-size="11" text-anchor="end" fill="#111">2 400</text>
<text x="506" y="156.2" font-size="11" text-anchor="end" fill="#111">2 500</text>
<text transform="translate(517.3 588.7) rotate(-90)" font-size="11" text-anchor="end" fill="#111">-40</text>
<text transform="translate(548.3 588.7) rotate(-90)" font-size="11" text-anchor="end" fill="#111">-30</text>
<text transform="translate(578.3 588.7) rotate(-90)" font-size="11" text-anchor="end" fill="#111">-20</text>
<text transform="translate(609.3 588.7) rotate(-90)" font-size="11" text-anchor="end" fill="#111">-10</text>
<text transform="translate(639.3 588.7) rotate(-90)" font-size="11" text-anchor="end" fill="#111">0</text>
<text transform="translate(670.3 588.7) rotate(-90)" font-size="11" text-anchor="end" fill="#111">10</text>
<text transform="translate(700.3 588.7) rotate(-90)" font-size="11" text-anchor="end" fill="#111">20</text>
<text transform="translate(731.3 588.7) rotate(-90)" font-size="11" text-anchor="end" fill="#111">30</text>
<text transform="translate(762.3 588.7) rotate(-90)" font-size="11" text-anchor="end" fill="#111">40</text>
<text transform="translate(792.3 588.7) rotate(-90)" font-size="11" text-anchor="end" fill="#111">50</text>
<text transform="translate(823.3 588.7) rotate(-90)" font-size="11" text-anchor="end" fill="#111">60</text>
<text transform="translate(853.3 588.7) rotate(-90)" font-size="11" text-anchor="end" fill="#111">70</text>
<text transform="translate(884.3 588.7) rotate(-90)" font-size="11" text-anchor="end" fill="#111">80</text>
<text transform="translate(914.3 588.7) rotate(-90)" font-size="11" text-anchor="end" fill="#111">90</text>
<text transform="translate(945.3 588.7) rotate(-90)" font-size="11" text-anchor="end" fill="#111">100</text>
<text transform="translate(975.3 588.7) rotate(-90)" font-size="11" text-anchor="end" fill="#111">110</text>
<text transform="translate(1006.3 588.7) rotate(-90)" font-size="11" text-anchor="end" fill="#111">120</text>
<text x="731.5" y="142" font-size="11.7" font-weight="bold" text-anchor="middle" fill="#222">Жел. обороты ХХ, МКПП или АКПП D-pos</text>
<text x="757" y="634.5" font-size="11.7" font-weight="bold" text-anchor="middle" fill="#222">Температура ОЖ, град.С</text>
<text transform="translate(473.4 366) rotate(-90)" font-size="11.7" font-weight="bold" text-anchor="middle" fill="#222">Обороты, об/мин</text>
<g clip-path="url(#plotclip)">
<polyline points="513.5,375.5 544.5,375.5 574.5,375.5 605.5,383.5 635.5,392.5 666.5,392.5 696.5,392.5 727.5,409.5 758.5,417.5 788.5,426.5 819.5,434.5 849.5,443.5 880.5,452.5 910.5,452.5 941.5,452.5 971.5,443.5 1002.5,439.5" fill="none" stroke="#1b3c8c" stroke-width="1"/>
<rect x="509.5" y="371.5" width="8" height="8" fill="#1a3ccc" stroke="#0b1656" stroke-width="1"/>
<rect x="540.5" y="371.5" width="8" height="8" fill="#1a3ccc" stroke="#0b1656" stroke-width="1"/>
<rect x="570.5" y="371.5" width="8" height="8" fill="#1a3ccc" stroke="#0b1656" stroke-width="1"/>
<rect x="601.5" y="379.5" width="8" height="8" fill="#1a3ccc" stroke="#0b1656" stroke-width="1"/>
<rect x="631.5" y="388.5" width="8" height="8" fill="#1a3ccc" stroke="#0b1656" stroke-width="1"/>
<rect x="662.5" y="388.5" width="8" height="8" fill="#1a3ccc" stroke="#0b1656" stroke-width="1"/>
<rect x="692.5" y="388.5" width="8" height="8" fill="#1a3ccc" stroke="#0b1656" stroke-width="1"/>
<rect x="723.5" y="405.5" width="8" height="8" fill="#1a3ccc" stroke="#0b1656" stroke-width="1"/>
<rect x="754.5" y="413.5" width="8" height="8" fill="#1a3ccc" stroke="#0b1656" stroke-width="1"/>
<rect x="784.5" y="422.5" width="8" height="8" fill="#1a3ccc" stroke="#0b1656" stroke-width="1"/>
<rect x="815.5" y="430.5" width="8" height="8" fill="#1a3ccc" stroke="#0b1656" stroke-width="1"/>
<rect x="845.5" y="439.5" width="8" height="8" fill="#1a3ccc" stroke="#0b1656" stroke-width="1"/>
<rect x="876.5" y="448.5" width="8" height="8" fill="#1a3ccc" stroke="#0b1656" stroke-width="1"/>
<rect x="906.5" y="448.5" width="8" height="8" fill="#1a3ccc" stroke="#0b1656" stroke-width="1"/>
<rect x="937.5" y="448.5" width="8" height="8" fill="#1a3ccc" stroke="#0b1656" stroke-width="1"/>
<rect x="967.5" y="439.5" width="8" height="8" fill="#1a3ccc" stroke="#0b1656" stroke-width="1"/>
<rect x="998.5" y="435.5" width="8" height="8" fill="#1a3ccc" stroke="#0b1656" stroke-width="1"/>
</g>
<text x="513.5" y="364.5" font-size="9" text-anchor="middle" fill="#5c0000" stroke="#5c0000" stroke-width=".2">1200,00</text>
<text x="574.5" y="364.5" font-size="9" text-anchor="middle" fill="#5c0000" stroke="#5c0000" stroke-width=".2">1200,00</text>
<text x="635.5" y="381.5" font-size="9" text-anchor="middle" fill="#5c0000" stroke="#5c0000" stroke-width=".2">1100,00</text>
<text x="696.5" y="381.5" font-size="9" text-anchor="middle" fill="#5c0000" stroke="#5c0000" stroke-width=".2">1100,00</text>
<text x="758.5" y="406.5" font-size="9" text-anchor="middle" fill="#5c0000" stroke="#5c0000" stroke-width=".2">950,00</text>
<text x="819.5" y="423.5" font-size="9" text-anchor="middle" fill="#5c0000" stroke="#5c0000" stroke-width=".2">850,00</text>
<text x="880.5" y="441.5" font-size="9" text-anchor="middle" fill="#5c0000" stroke="#5c0000" stroke-width=".2">750,00</text>
<text x="941.5" y="441.5" font-size="9" text-anchor="middle" fill="#5c0000" stroke="#5c0000" stroke-width=".2">750,00</text>
<text x="1002.5" y="428.5" font-size="9" text-anchor="middle" fill="#5c0000" stroke="#5c0000" stroke-width=".2">825,00</text>
</svg>
<div class="abs" style="left:451px;top:653px;width:561px;height:84px;background:linear-gradient(180deg,#cfe0f9 0,#bcd3f5 30%,#a4c1ef 75%,#9dbcec 100%)"></div>
<div class="abs" style="left:454px;top:656px;width:173px;height:78px;border:1px solid #8aa2cc;box-shadow:1px 1px 0 #eef4fd, inset 1px 1px 0 #eef4fd"></div>
<div class="abs" style="left:630px;top:656px;width:188px;height:78px;border:1px solid #8aa2cc;box-shadow:1px 1px 0 #eef4fd, inset 1px 1px 0 #eef4fd"></div>
<div class="abs" style="left:821px;top:656px;width:182px;height:78px;border:1px solid #8aa2cc;box-shadow:1px 1px 0 #eef4fd, inset 1px 1px 0 #eef4fd"></div>
<div class="abs" style="left:1007px;top:656px;width:5px;height:78px;border:1px solid #8aa2cc;border-right:none;box-shadow:inset 1px 1px 0 #eef4fd"></div>
<div class="abs" style="left:461.5px;top:665.5px;width:15px;height:15px;border-radius:2px;border:1px solid #1e7a1e;background:linear-gradient(180deg,#7fd67f 0,#2fae2f 45%,#1b8f1b 100%)"></div>
<svg class="abs" style="left:463.5px;top:667.5px" width="11" height="11" viewBox="0 0 12 12"><path d="M1.5 6 H9 M6 2 L10 6 L6 10" stroke="#fff" stroke-width="2" fill="none"/></svg>
<div class="abs" style="left:461.5px;top:688.5px;width:15px;height:15px;border-radius:2px;border:1px solid #1e7a1e;background:linear-gradient(180deg,#7fd67f 0,#2fae2f 45%,#1b8f1b 100%)"></div>
<svg class="abs" style="left:463.5px;top:690.5px" width="11" height="11" viewBox="0 0 12 12"><path d="M1.5 6 H9 M6 2 L10 6 L6 10" stroke="#fff" stroke-width="2" fill="none"/></svg>
<div class="t" style="left:481px;top:668px;font-size:11px;transform-origin:0 0;transform:scaleX(1.042)">Установить в</div>
<div class="t" style="left:483px;top:690px;font-size:11px;transform-origin:0 0;transform:scaleX(1.01)">Изменить на</div>
<div class="abs" style="left:463px;top:710px;width:13px;height:13px;border:1px solid #8e8f8f;background:linear-gradient(135deg,#dcdcdc 0,#f6f6f6 100%);box-shadow:inset 0 0 0 1px #f4f4f4"></div>
<div class="abs" style="left:489px;top:710px;width:13px;height:13px;border:1px solid #8e8f8f;background:linear-gradient(135deg,#dcdcdc 0,#f6f6f6 100%);box-shadow:inset 0 0 0 1px #f4f4f4"></div>
<div class="t" style="left:478px;top:712px;font-size:11px;transform-origin:0 0;transform:scaleX(.8)">%</div>
<div class="t" style="left:505px;top:712px;font-size:11px;transform-origin:0 0;transform:scaleX(1.01)">относит.</div>
<div class="abs" style="left:555px;top:662px;width:63px;height:21px;background:#fff;border:1px solid #dbe6f5"></div>
<div class="t" style="left:559px;top:665px;font-size:11px;transform-origin:0 0;transform:scaleX(.955)">0,000</div>
<div class="abs" style="left:603px;top:664px;width:13px;height:8px;border:1px solid #c2c2c2;background:#f0f0f0"></div>
<div class="abs" style="left:603px;top:672px;width:13px;height:8px;border:1px solid #c2c2c2;background:#f0f0f0"></div>
<svg class="abs" style="left:606px;top:666px" width="7" height="4"><path d="M0 4 L3.5 0 L7 4Z" fill="#5a6aa8"/></svg>
<svg class="abs" style="left:606px;top:674px" width="7" height="4"><path d="M0 0 L3.5 4 L7 0Z" fill="#5a6aa8"/></svg>
<div class="abs" style="left:555px;top:684px;width:63px;height:21px;background:#fff;border:1px solid #dbe6f5"></div>
<div class="t" style="left:559px;top:687px;font-size:11px;transform-origin:0 0;transform:scaleX(.955)">0,000</div>
<div class="abs" style="left:603px;top:686px;width:13px;height:8px;border:1px solid #c2c2c2;background:#f0f0f0"></div>
<div class="abs" style="left:603px;top:694px;width:13px;height:8px;border:1px solid #c2c2c2;background:#f0f0f0"></div>
<svg class="abs" style="left:606px;top:688px" width="7" height="4"><path d="M0 4 L3.5 0 L7 4Z" fill="#5a6aa8"/></svg>
<svg class="abs" style="left:606px;top:696px" width="7" height="4"><path d="M0 0 L3.5 4 L7 0Z" fill="#5a6aa8"/></svg>
<div class="abs" style="left:555px;top:706px;width:63px;height:21px;background:#fff;border:1px solid #dbe6f5"></div>
<div class="t" style="left:559px;top:709px;font-size:11px;transform-origin:0 0;transform:scaleX(.955)">0,000</div>
<div class="abs" style="left:603px;top:708px;width:13px;height:8px;border:1px solid #c2c2c2;background:#f0f0f0"></div>
<div class="abs" style="left:603px;top:716px;width:13px;height:8px;border:1px solid #c2c2c2;background:#f0f0f0"></div>
<svg class="abs" style="left:606px;top:710px" width="7" height="4"><path d="M0 4 L3.5 0 L7 4Z" fill="#5a6aa8"/></svg>
<svg class="abs" style="left:606px;top:718px" width="7" height="4"><path d="M0 0 L3.5 4 L7 0Z" fill="#5a6aa8"/></svg>
<div class="abs" style="left:638px;top:673px;width:82px;height:12px;background:#e7e7e7;border-top:1px solid #cfcfcf;border-bottom:1px solid #f8f8f8"></div>
<div class="abs" style="left:638px;top:672px;width:8px;height:14px;border:1px solid #7c7c7c;border-radius:1px 1px 4px 4px;background:linear-gradient(180deg,#f4f4f4 0,#e2e2e2 50%,#c8c8c8 100%)"></div>
<div class="abs" style="left:638px;top:701px;width:82px;height:12px;background:#e7e7e7;border-top:1px solid #cfcfcf;border-bottom:1px solid #f8f8f8"></div>
<div class="abs" style="left:670px;top:700px;width:8px;height:14px;border:1px solid #7c7c7c;border-radius:1px 1px 4px 4px;background:linear-gradient(180deg,#f4f4f4 0,#e2e2e2 50%,#c8c8c8 100%)"></div>
<div class="abs" style="left:728px;top:662px;width:83px;height:67px;border:1px solid #8e8f8f;border-radius:3px;background:linear-gradient(180deg,#f2f2f2 0,#ebebeb 50%,#dddddd 50%,#cfcfcf 100%);box-shadow:inset 0 0 0 1px #fcfcfc"></div>
<svg class="abs" style="left:733px;top:666px" width="73" height="59" viewBox="733 666 73 59"><rect x="734" y="667" width="71" height="57" fill="#fff"/><path d="M734.5 667 V724 M741.5 667 V724 M748.5 667 V724 M755.5 667 V724 M762.5 667 V724 M769.5 667 V724 M776.5 667 V724 M783.5 667 V724 M790.5 667 V724 M797.5 667 V724 M804.5 667 V724 M734 667.5 H805 M734 675.5 H805 M734 683.5 H805 M734 691.5 H805 M734 699.5 H805 M734 707.5 H805 M734 715.5 H805 M734 723.5 H805" stroke="#7c7c7c" stroke-width="1" fill="none"/><path d="M738 671 H752 C775 671 790 690 802 720" stroke="#1a1a9a" stroke-width="1.1" fill="none"/><path d="M738 720.5 H748 C772 720 790 705 802 672" stroke="#b02020" stroke-width="1.1" fill="none"/></svg>
<div class="abs" style="left:827px;top:665px;width:13px;height:13px;border:1px solid #8e8f8f;background:linear-gradient(135deg,#dcdcdc 0,#f6f6f6 100%);box-shadow:inset 0 0 0 1px #f4f4f4"></div>
<svg class="abs" style="left:829px;top:667px" width="9" height="9" viewBox="0 0 9 9"><path d="M1 4 L3.5 7.5 L8 0.5" stroke="#2a3a8a" stroke-width="1.8" fill="none"/></svg>
<div class="t" style="left:847px;top:667px;font-size:11px;transform-origin:0 0;transform:scaleX(1.0)">2D - отображать все точки</div>
<div class="abs" style="left:827px;top:681px;width:13px;height:13px;border:1px solid #e4e6ea;background:#f7f7f7"></div>
<div class="t" style="left:847px;top:683px;font-size:11px;transform-origin:0 0;transform:scaleX(0.992)">3D - следить за мышью</div>
<div class="abs" style="left:827px;top:697px;width:13px;height:13px;border:1px solid #e4e6ea;background:#f7f7f7"></div>
<div class="t" style="left:847px;top:699px;font-size:11px;transform-origin:0 0;transform:scaleX(1.005)">3D - изм. соседние точки</div>
<div class="abs" style="left:827px;top:713px;width:13px;height:13px;border-radius:3px;background:#f3f5f9"></div>
<div class="t" style="left:847px;top:715px;font-size:11px;color:#f4f7fc;text-shadow:1px 1px 0 #b9cdee;transform-origin:0 0;transform:scaleX(0.977)">2D - отменить ZOOM</div>
<div class="abs" style="left:980px;top:696px;width:22px;height:20px;border:1px solid #8a8a8a;background:#c3c3c3"></div>
<svg class="abs" style="left:983px;top:699px" width="17" height="14" viewBox="0 0 17 14"><rect x="0" y="0" width="17" height="14" fill="#1f5fb0"/><rect x="1" y="1.0" width="3" height="3.3" fill="#d8f0ff"/><rect x="5" y="1.0" width="3" height="3.3" fill="#d8f0ff"/><rect x="9" y="1.0" width="3" height="3.3" fill="#d8f0ff"/><rect x="13" y="1.0" width="3" height="3.3" fill="#d8f0ff"/><rect x="1" y="5.3" width="3" height="3.3" fill="#d8f0ff"/><rect x="5" y="5.3" width="3" height="3.3" fill="#d8f0ff"/><rect x="9" y="5.3" width="3" height="3.3" fill="#d8f0ff"/><rect x="13" y="5.3" width="3" height="3.3" fill="#d8f0ff"/><rect x="1" y="9.6" width="3" height="3.3" fill="#d8f0ff"/><rect x="5" y="9.6" width="3" height="3.3" fill="#d8f0ff"/><rect x="9" y="9.6" width="3" height="3.3" fill="#d8f0ff"/><rect x="13" y="9.6" width="3" height="3.3" fill="#d8f0ff"/></svg>
<div class="abs" style="left:8px;top:740px;width:1008px;height:2px;background:#f4f8fd"></div>
<div class="abs" style="left:8px;top:741px;width:1008px;height:1px;background:#8f9fbd"></div>
<div class="abs" style="left:8px;top:742px;width:1008px;height:18px;background:linear-gradient(180deg,#c7daf6 0,#a9c5f0 25%,#8db0e6 60%,#9dbcec 100%)"></div>
<div class="t" style="left:13px;top:746px;font-size:12px;transform-origin:0 0;transform:scaleX(.98)">Delphi MT-80</div>
<div class="t" style="left:167px;top:746px;font-size:12px;transform-origin:0 0;transform:scaleX(.9)">28142990</div>
<div class="abs" style="left:163px;top:743px;width:1px;height:16px;background:#7d9bd0"></div><div class="abs" style="left:164px;top:743px;width:1px;height:16px;background:#d5e3f8"></div>
<div class="abs" style="left:365px;top:743px;width:1px;height:16px;background:#7d9bd0"></div><div class="abs" style="left:366px;top:743px;width:1px;height:16px;background:#d5e3f8"></div>
<div class="abs" style="left:314px;top:744px;width:48px;height:14px;background:linear-gradient(180deg,#9dff9d 0,#4cf04c 35%,#1fdc1f 60%,#2fe02f 100%)"></div>
<div class="t" style="left:324px;top:746px;font-size:12px;transform-origin:0 0;transform:scaleX(.93)">100%</div>
<div class="abs" style="left:1010px;top:755px;width:2px;height:2px;background:#b9cff0"></div>
<div class="abs" style="left:1006px;top:755px;width:2px;height:2px;background:#b9cff0"></div>
<div class="abs" style="left:1010px;top:751px;width:2px;height:2px;background:#b9cff0"></div>
<div class="abs" style="left:1002px;top:755px;width:2px;height:2px;background:#b9cff0"></div>
<div class="abs" style="left:1006px;top:751px;width:2px;height:2px;background:#b9cff0"></div>
<div class="abs" style="left:1010px;top:747px;width:2px;height:2px;background:#b9cff0"></div>
</div></div></body></html>
